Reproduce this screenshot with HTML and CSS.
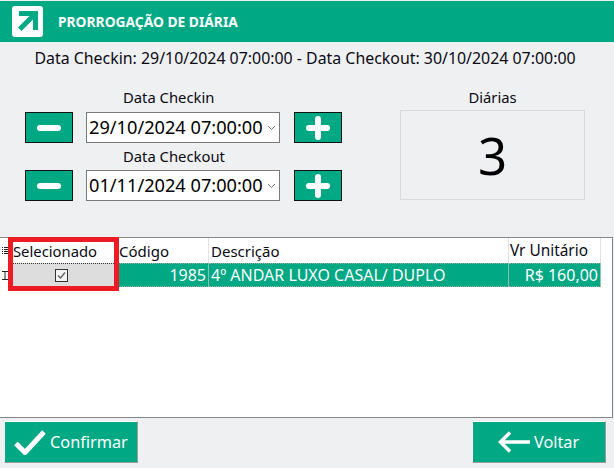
FILE: index.html
```html
<!DOCTYPE html>
<html lang="pt-BR">
<head>
<meta charset="utf-8">
<title>Prorrogação de Diária</title>
<link rel="stylesheet" href="styles.css">
</head>
<body>
<div class="app">
  <header class="titlebar">
    <span class="logo">
      <svg width="31" height="31" viewBox="0 0 31 31"><rect width="31" height="31" rx="3" fill="#fff"/><path d="M7 5h19v19h-5V13.500L9.500 25 6 21.500 17.500 10H7z" fill="#00a884"/></svg>
    </span>
    <h1 class="title">PRORROGAÇÃO DE DIÁRIA</h1>
  </header>
  <p class="summary">Data Checkin: 29/10/2024 07:00:00 - Data Checkout: 30/10/2024 07:00:00</p>
  <section class="form">
    <div class="dates">
      <div class="field-label">Data Checkin</div>
      <div class="date-row">
        <button class="step"><svg width="24" height="8" viewBox="0 0 24 8"><rect width="24" height="6" y="1" rx="3" fill="#fff"/></svg></button>
        <div class="date-input"><span>29/10/2024 07:00:00</span><svg class="chev" width="9" height="6" viewBox="0 0 9 6"><path d="M1 1l3.500 3.500L8 1" fill="none" stroke="#777"/></svg></div>
        <button class="step"><svg width="24" height="24" viewBox="0 0 24 24"><path d="M12 3v18M3 12h18" stroke="#fff" stroke-width="6" stroke-linecap="round"/></svg></button>
      </div>
      <div class="field-label">Data Checkout</div>
      <div class="date-row">
        <button class="step"><svg width="24" height="8" viewBox="0 0 24 8"><rect width="24" height="6" y="1" rx="3" fill="#fff"/></svg></button>
        <div class="date-input"><span>01/11/2024 07:00:00</span><svg class="chev" width="9" height="6" viewBox="0 0 9 6"><path d="M1 1l3.500 3.500L8 1" fill="none" stroke="#777"/></svg></div>
        <button class="step"><svg width="24" height="24" viewBox="0 0 24 24"><path d="M12 3v18M3 12h18" stroke="#fff" stroke-width="6" stroke-linecap="round"/></svg></button>
      </div>
    </div>
    <div class="nights">
      <div class="field-label">Diárias</div>
      <div class="nights-box">3</div>
    </div>
  </section>
  <section class="grid">
    <div class="row head">
      <div class="cell ind"><svg width="7" height="8" viewBox="0 0 7 8"><path d="M0 .5h1M2 .5h5M0 2.500h1M2 2.500h5M0 4.500h1M2 4.500h5M0 6.500h1M2 6.500h5" stroke="#222"/></svg></div>
      <div class="cell">Selecionado</div>
      <div class="cell">Código</div>
      <div class="cell">Descrição</div>
      <div class="cell">Vr Unitário</div>
    </div>
    <div class="row data">
      <div class="cell ind"><svg width="6" height="9" viewBox="0 0 6 9"><path d="M0 .5h6M0 8.500h6M3 0v9" stroke="#222"/></svg></div>
      <div class="cell check"><svg width="13" height="13" viewBox="0 0 13 13"><rect x=".5" y=".5" width="12" height="12" fill="#f4f4f4" stroke="#333"/><path d="M3 6.500l2.500 2.500L10 3.500" fill="none" stroke="#666" stroke-width="1.500"/></svg></div>
      <div class="cell num">1985</div>
      <div class="cell">4º ANDAR LUXO CASAL/ DUPLO</div>
      <div class="cell num">R$ 160,00</div>
    </div>
    <div class="highlight"></div>
  </section>
  <footer class="actions">
    <button class="action">
      <svg width="33" height="25" viewBox="0 0 33 25"><path d="M2 13.500l9 9L30 2" fill="none" stroke="#fff" stroke-width="5"/></svg>
      <span>Confirmar</span>
    </button>
    <button class="action">
      <svg width="33" height="22" viewBox="0 0 33 22"><path d="M33 11H3M13 1.500L3.500 11l9.500 9.500" fill="none" stroke="#fff" stroke-width="3.500"/></svg>
      <span>Voltar</span>
    </button>
  </footer>
</div>
</body>
</html>
```
FILE: styles.css
```css
* { box-sizing: border-box; }
html, body { margin: 0; padding: 0; }
body { background: #eff0f2; font-family: "Noto Sans", "Open Sans", sans-serif; color: #0a0a14; }
.app { width: 614px; height: 468px; display: flex; flex-direction: column; overflow: hidden; padding-top: 1px; }
.titlebar { height: 41px; background: #00a884; display: flex; align-items: center; padding-left: 12px; flex: none; }
.logo { display: flex; width: 31px; height: 31px; }
.title { margin: 0 0 0 15px; font-size: 13.800px; font-weight: 700; color: #fff; }
.summary { margin: 0; height: 33px; line-height: 33px; font-size: 15.900px; text-align: center; flex: none; white-space: nowrap; padding-right: 4px; }
.form { display: flex; height: 152px; flex: none; padding: 12px 0 0 25px; }
.dates { width: 317px; }
.field-label { height: 20px; line-height: 20px; font-size: 14.800px; text-align: center; }
.dates .field-label { text-align: left; padding-left: 98px; }
.dates .date-row + .field-label { height: 19px; }
.date-row { display: flex; align-items: center; height: 31px; margin: 5px 0 3px; }
.date-row:last-child { margin-bottom: 0; }
.step { width: 48px; height: 31px; padding: 0; background: #00a884; border: 1px solid #111; display: flex; align-items: center; justify-content: center; }
.date-input { width: 194px; height: 31px; margin: 0 14px 0 13px; background: #fff; border: 1px solid #7a7a7a; display: flex; align-items: center; padding: 0 3px 2px 2px; font-size: 18.200px; color: #000; justify-content: space-between; white-space: nowrap; }
.chev { flex: none; margin-top: 2px; }
.nights { margin-left: 58px; width: 185px; }
.nights-box { width: 185px; height: 90px; margin-top: 3px; border: 1px solid #d9dadc; display: flex; align-items: center; justify-content: center; font-size: 51px; color: #000; }
.grid { position: relative; height: 181px; margin-top: 10px; width: 613px; background: #fff; border: 1px solid #85868a; border-left: 0; flex: none; }
.row { display: grid; grid-template-columns: 10px 108px 91px 300px 92px; }
.head { height: 25px; font-size: 15px; }
.head .cell { line-height: 26px; padding-left: 2px; border-right: 1px solid #e2e2e2; white-space: nowrap; }
.head .cell:nth-child(2) { padding-left: 3px; font-size: 14.800px; }
.head .cell:nth-child(3) { padding-left: 1px; }
.head .cell:nth-child(5) { padding-left: 1px; font-size: 15.400px; }
.head .cell.ind { padding: 0 0 0 2px; display: flex; align-items: center; border: 0; }
.data { height: 24px; font-size: 16px; color: #fff; }
.data .cell { background: #00a884; line-height: 22px; padding: 0 2px; border-top: 1px dotted #aaa; border-bottom: 1px dotted #aaa; border-right: 1px solid #8fbfb2; white-space: nowrap; }
.data .cell.ind { background: #fff; border: 0; padding: 0 0 0 2px; display: flex; align-items: center; }
.data .cell.check { background: #dcdddc; border-top: 1px dotted #333; border-bottom: 1px dotted #333; border-right: 0; display: flex; align-items: center; justify-content: center; padding: 0 6px 0 0; }
.num { text-align: right; }
.highlight { position: absolute; left: 8px; top: -1px; width: 111px; height: 54px; border: 5px solid #ed1c24; pointer-events: none; }
.actions { display: flex; justify-content: space-between; padding: 3px 8px 0 4px; flex: none; }
.action { width: 134px; height: 42px; padding: 0 0 0 9px; background: #00a884; border: 1px solid #fff; border-right-color: #9a9a9a; border-bottom-color: #9a9a9a; display: flex; align-items: center; gap: 3px; font: inherit; font-size: 16.300px; color: #fff; }
.action + .action { padding-left: 24px; gap: 4px; }
```
